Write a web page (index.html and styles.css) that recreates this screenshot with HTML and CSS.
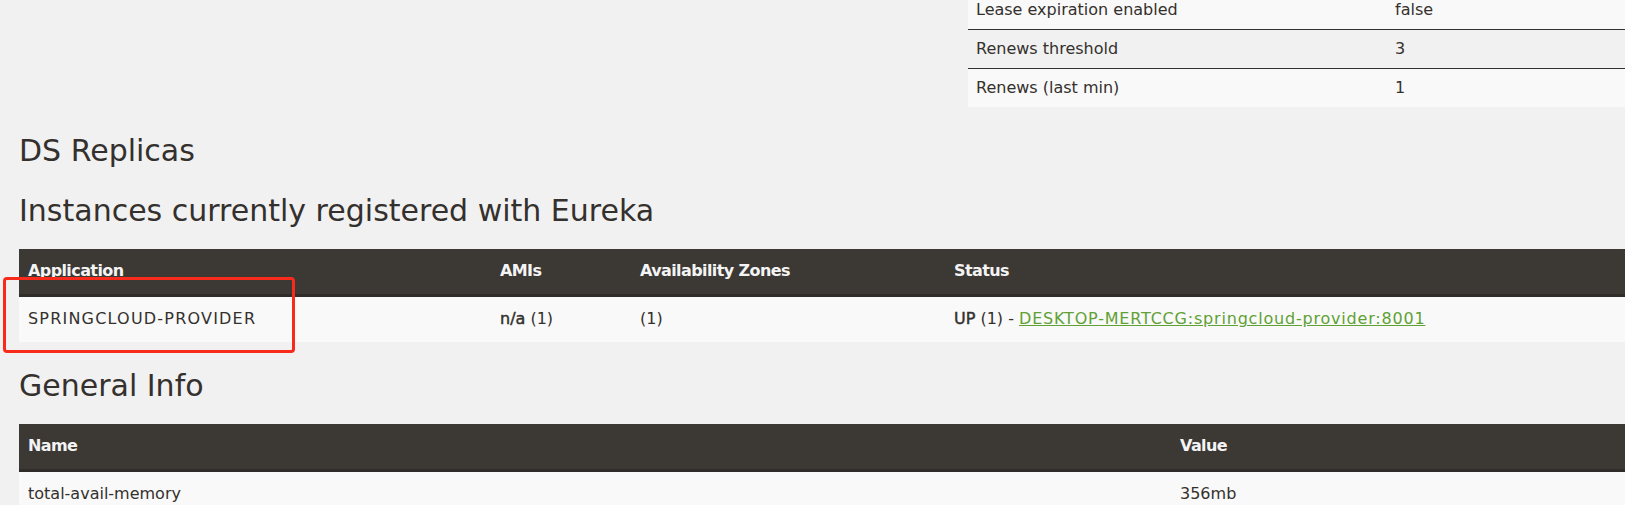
FILE: index.html
```html
<!DOCTYPE html>
<html lang="en">
<head>
<meta charset="utf-8">
<title>Eureka</title>
<link rel="stylesheet" href="styles.css">
</head>
<body>
<div class="page">
  <div class="status-row">
    <div class="status-left"></div>
    <table class="table status-table">
      <colgroup><col class="c-status-name"><col></colgroup>
      <tbody>
        <tr><td>Lease expiration enabled</td><td>false</td></tr>
        <tr><td>Renews threshold</td><td>3</td></tr>
        <tr><td>Renews (last min)</td><td>1</td></tr>
      </tbody>
    </table>
  </div>

  <h1>DS Replicas</h1>

  <h1>Instances currently registered with Eureka</h1>
  <div class="annotated">
    <table class="table grid-table">
      <colgroup><col class="c-app"><col class="c-ami"><col class="c-zone"><col></colgroup>
      <thead>
        <tr><th>Application</th><th>AMIs</th><th>Availability Zones</th><th>Status</th></tr>
      </thead>
      <tbody>
        <tr>
          <td><b class="app-name">SPRINGCLOUD-PROVIDER</b></td>
          <td><b class="faux-bold">n/a</b> (1)</td>
          <td>(1)</td>
          <td><b class="faux-bold">UP</b> (1) - <a class="instance-link" href="#">DESKTOP-MERTCCG:springcloud-provider:8001</a></td>
        </tr>
      </tbody>
    </table>
    <div class="highlight"></div>
  </div>

  <h1>General Info</h1>
  <table class="table grid-table">
    <colgroup><col class="c-name"><col></colgroup>
    <thead>
      <tr><th>Name</th><th>Value</th></tr>
    </thead>
    <tbody>
      <tr><td>total-avail-memory</td><td>356mb</td></tr>
    </tbody>
  </table>
</div>
</body>
</html>
```
FILE: styles.css
```css
html, body {
  margin: 0;
  padding: 0;
  background: #f1f1f1;
}

body {
  font-family: "DejaVu Sans", "Noto Sans", sans-serif;
  font-size: 16px;
  line-height: 22px;
  color: #34302d;
  overflow: hidden;
}

.page {
  padding-left: 19px;
  margin-top: -10px;
}

.status-row {
  display: flex;
  gap: 18px;
}

.status-left {
  flex: 0 0 931px;
}

.table {
  border-collapse: collapse;
  border-spacing: 0;
  table-layout: fixed;
}

.status-table {
  flex: 1 1 auto;
}

.status-table .c-status-name { width: 419px; }

.status-table td {
  padding: 8px 8px;
  border-top: 1px solid #34302d;
  vertical-align: top;
}

.status-table tr:nth-child(odd) td { background: #f9f9f9; }
.status-table tr:nth-child(even) td { background: #f1f1f1; }

h1 {
  font-family: "DejaVu Sans", sans-serif;
  font-weight: normal;
  font-size: 30px;
  line-height: 33px;
  color: #34302d;
  margin: 27px 0 22px;
  letter-spacing: 0;
}

.grid-table {
  width: 100%;
}

.grid-table .c-app { width: 472px; }
.grid-table .c-ami { width: 140px; }
.grid-table .c-zone { width: 314px; }
.grid-table .c-name { width: 1152px; }

.grid-table th {
  text-align: left;
  background: #3c3834;
  color: #f4f4f4;
  font-weight: bold;
  padding: 11px 9px 12px;
  border-bottom: 3px solid #2f2c29;
  letter-spacing: -0.6px;
}

.grid-table td {
  padding: 11px 9px 12px;
  background: #f9f9f9;
  vertical-align: top;
}

.grid-table td b {
  font-weight: normal;
}

.grid-table td .faux-bold {
  -webkit-text-stroke: 0.45px #34302d;
}

.app-name {
  letter-spacing: 1.2px;
}

.instance-link {
  color: #5fa134;
  text-decoration: underline;
  letter-spacing: 0.8px;
}

.annotated {
  position: relative;
}

.highlight {
  position: absolute;
  left: -16px;
  top: 28px;
  width: 286px;
  height: 70px;
  border: 3px solid #f82a1c;
  border-radius: 4px;
  pointer-events: none;
}
```
